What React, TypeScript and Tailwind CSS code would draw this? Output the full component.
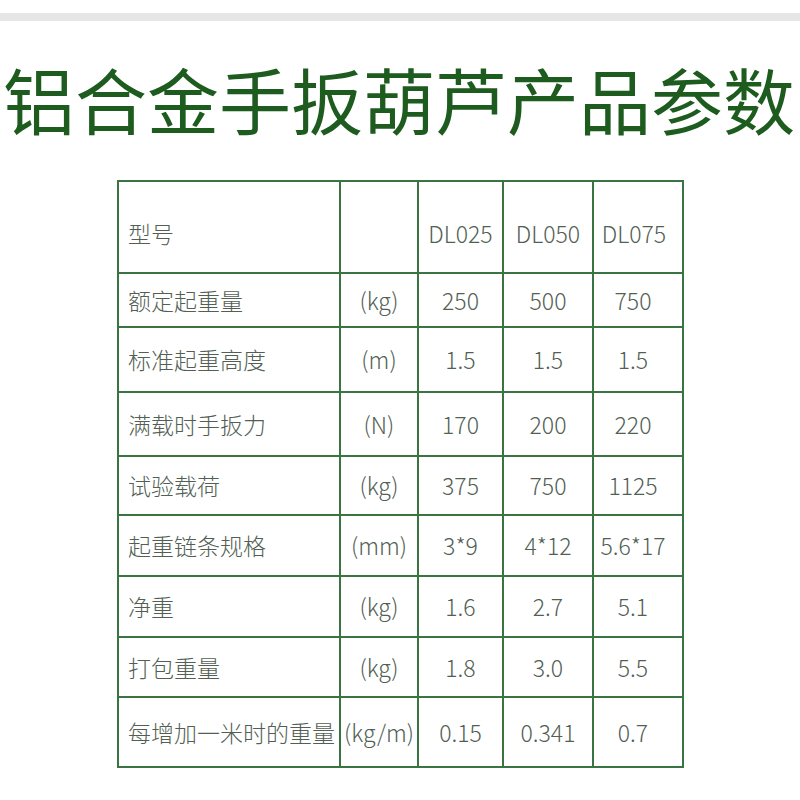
const rows: { label: string; unit: string; values: string[]; h: string }[] = [
  { label: '额定起重量', unit: '(kg)', values: ['250', '500', '750'], h: 'h-[54px]' },
  { label: '标准起重高度', unit: '(m)', values: ['1.5', '1.5', '1.5'], h: 'h-[65px]' },
  { label: '满载时手扳力', unit: '(N)', values: ['170', '200', '220'], h: 'h-[64px]' },
  { label: '试验载荷', unit: '(kg)', values: ['375', '750', '1125'], h: 'h-[59px]' },
  { label: '起重链条规格', unit: '(mm)', values: ['3*9', '4*12', '5.6*17'], h: 'h-[61px]' },
  { label: '净重', unit: '(kg)', values: ['1.6', '2.7', '5.1'], h: 'h-[61px]' },
  { label: '打包重量', unit: '(kg)', values: ['1.8', '3.0', '5.5'], h: 'h-[60px]' },
  { label: '每增加一米时的重量', unit: '(kg/m)', values: ['0.15', '0.341', '0.7'], h: 'h-[70px]' },
];

const cell = 'border-2 border-[#3a7440] p-0 align-middle';

export default function App() {
  return (
    <div className="w-[800px] h-[800px] bg-white overflow-hidden font-['Noto_Sans_CJK_SC',sans-serif]">
      {/* top divider */}
      <div className="h-[13px]" />
      <div className="h-[8px] bg-[#e6e6e6]" />

      {/* title */}
      <h1 className="mt-[32px] pl-[3px] text-[72px] leading-[90px] whitespace-nowrap font-normal text-[#1d5b1f]">
        铝合金手扳葫芦产品参数
      </h1>

      {/* parameter table */}
      <div className="mt-[37px] pl-[117px]">
        <table className="border-collapse table-fixed text-[23px] font-light text-[#535f55]">
          <colgroup>
            <col className="w-[222px]" />
            <col className="w-[78px]" />
            <col className="w-[85px]" />
            <col className="w-[90px]" />
            <col className="w-[90px]" />
          </colgroup>
          <tbody>
            <tr className="h-[92px]">
              <td className={`${cell} pl-[9px] pt-[12px]`}>型号</td>
              <td className={cell} />
              <td className={`${cell} text-center pt-[12px]`}>DL025</td>
              <td className={`${cell} text-center pt-[12px]`}>DL050</td>
              <td className={`${cell} text-center pt-[12px] pr-[8px]`}>DL075</td>
            </tr>
            {rows.map((r) => (
              <tr key={r.label} className={r.h}>
                <td className={`${cell} pl-[9px] whitespace-nowrap`}>{r.label}</td>
                <td className={`${cell} text-center whitespace-nowrap`}>{r.unit}</td>
                {r.values.map((v, i) => (
                  <td key={i} className={`${cell} text-center whitespace-nowrap ${i === 2 ? 'pr-[10px]' : ''}`}>
                    {v}
                  </td>
                ))}
              </tr>
            ))}
          </tbody>
        </table>
      </div>
    </div>
  );
}
